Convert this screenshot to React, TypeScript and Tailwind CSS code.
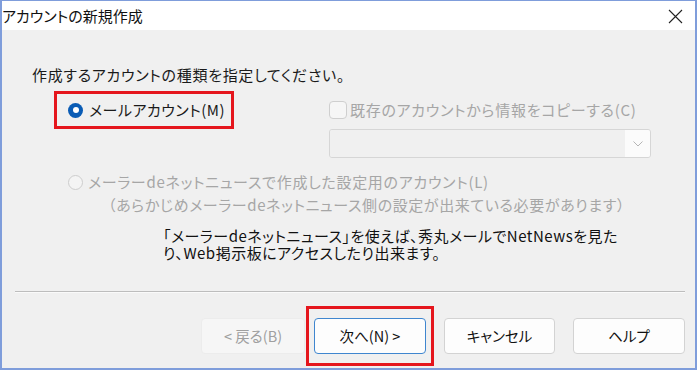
import React from "react";

const font = "font-['Noto_Sans_CJK_JP','Noto_Sans',sans-serif] [font-feature-settings:'palt']";

export default function App() {
  return (
    <div className={`w-[697px] h-[370px] bg-[#f0f0f0] border-2 border-t border-[#7f9ddb] flex flex-col text-[#1a1a1a] ${font}`}>
      {/* title bar */}
      <div className="h-[29px] bg-white flex items-center justify-between pr-[12px] shrink-0">
        <span className="text-[15px] leading-[20px] text-[#111]">アカウントの新規作成</span>
        <svg width="15" height="15" viewBox="0 0 15 15" className="mt-[2px]">
          <path d="M1 1 L14 14 M14 1 L1 14" stroke="#222" strokeWidth="1.1" fill="none" />
        </svg>
      </div>

      <div className="flex-1 flex flex-col">
        <div className="mt-[35px] pl-[30px] text-[15px] leading-[20px] tracking-[0.7px]">作成するアカウントの種類を指定してください。</div>

        <div className="flex items-start mt-[6px]">
          <div className="w-[327px] pl-[52px] shrink-0">
            <div className="w-[180px] h-[38px] border-[3px] border-[#e5161d] flex items-center pl-[11px] gap-[6px]">
              <div className="w-[15px] h-[15px] rounded-full bg-[#0a5cb5] flex items-center justify-center shrink-0">
                <div className="w-[6px] h-[6px] rounded-full bg-white" />
              </div>
              <span className="text-[15px] leading-[20px] tracking-[0.5px]">メールアカウント(M)</span>
            </div>
          </div>
          <div className="flex flex-col mt-[10px]">
            <div className="flex items-center gap-[3px] h-[18px]">
              <div className="w-[18px] h-[18px] rounded-[4px] border border-[#cfcfcf] bg-[#f6f6f6] shrink-0" />
              <span className="text-[15px] leading-[20px] tracking-[0.7px] text-[#a6a6a6]">既存のアカウントから情報をコピーする(C)</span>
            </div>
            <div className="mt-[10px] w-[322px] h-[29px] border border-[#d6d6d6] rounded-[3px] flex overflow-hidden">
              <div className="flex-1 bg-[#f0f0f0]" />
              <div className="w-[25px] bg-[#fbfbfb] flex items-center justify-center">
                <svg width="10" height="6" viewBox="0 0 10 6">
                  <path d="M0.5 0.5 L5 5 L9.5 0.5" stroke="#b5b5b5" strokeWidth="1" fill="none" />
                </svg>
              </div>
            </div>
          </div>
        </div>

        <div className="flex items-center mt-[14px] pl-[66px] gap-[5px]">
          <div className="w-[15px] h-[15px] rounded-full border border-[#cdcdcd] bg-[#f4f4f4] shrink-0" />
          <span className="text-[15px] leading-[20px] tracking-[0.7px] text-[#a6a6a6]">メーラーdeネットニュースで作成した設定用のアカウント(L)</span>
        </div>
        <div className="mt-[3px] pl-[106px] text-[15px] leading-[20px] tracking-[0.6px] text-[#a6a6a6]">（あらかじめメーラーdeネットニュース側の設定が出来ている必要があります）</div>

        <div className="mt-[12px] pl-[161px] text-[15px] leading-[17px] tracking-[0.5px] text-[#111]">
          「メーラーdeネットニュース」を使えば、秀丸メールでNetNewsを見た
          <br />
          り、Web掲示板にアクセスしたり出来ます。
        </div>

        <div className="mt-[30px] ml-[13px] mr-[10px] h-[2px] border-t border-[#bdbdbd] border-b border-b-[#fafafa]" />

        <div className="mt-[13px] flex items-center justify-end pr-[10px]">
          <div className="w-[104px] h-[36px] rounded-[4px] bg-[#f6f6f6] border border-[#ececec] flex items-center justify-center text-[14.5px] text-[#9f9f9f]">&lt; 戻る(B)</div>
          <div className="ml-[1px] w-[128px] h-[60px] border-[3px] border-[#e5161d] flex items-center justify-center">
            <div className="w-[112px] h-[36px] rounded-[4px] bg-[#fdfdfd] border border-[#3f86cf] flex items-center justify-center text-[14.5px] text-[#111]">次へ(N) &gt;</div>
          </div>
          <div className="ml-[10px] w-[111px] h-[36px] rounded-[4px] bg-[#fdfdfd] border border-[#d3d3d3] flex items-center justify-center text-[14.5px] text-[#111]">キャンセル</div>
          <div className="ml-[18px] w-[112px] h-[36px] rounded-[4px] bg-[#fdfdfd] border border-[#d3d3d3] flex items-center justify-center text-[14.5px] text-[#111]">ヘルプ</div>
        </div>
      </div>
    </div>
  );
}
